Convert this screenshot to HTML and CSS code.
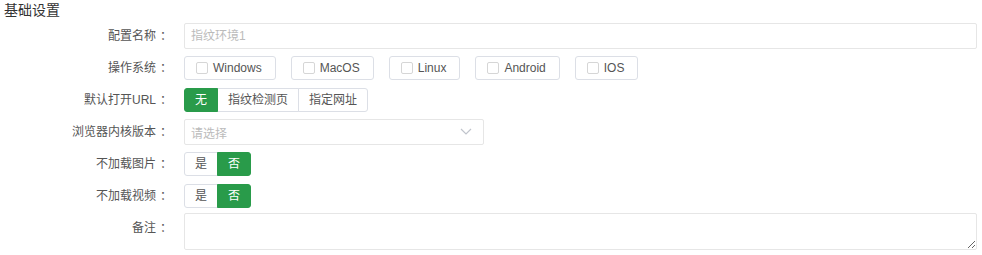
FILE: index.html
```html
<!DOCTYPE html>
<html lang="zh-CN">
    <head>
        <meta charset="utf-8">
        <title>基础设置</title>
        <link rel="stylesheet" href="styles.css">
    </head>
    <body>
        <div class="section">
            <h3 class="section-title">基础设置</h3>
            <div class="form">
                <div class="form-row">
                    <label class="form-label">配置名称<span class="colon">：</span></label>
                    <div class="form-control">
                        <input class="text-input" type="text" placeholder="指纹环境1">
                    </div>
                </div>
                <div class="form-row">
                    <label class="form-label">操作系统<span class="colon">：</span></label>
                    <div class="form-control">
                        <span class="check-btn"><i class="check-box"></i>Windows</span>
                        <span class="check-btn"><i class="check-box"></i>MacOS</span>
                        <span class="check-btn"><i class="check-box"></i>Linux</span>
                        <span class="check-btn"><i class="check-box"></i>Android</span>
                        <span class="check-btn"><i class="check-box"></i>IOS</span>
                    </div>
                </div>
                <div class="form-row">
                    <label class="form-label">默认打开URL<span class="colon">：</span></label>
                    <div class="form-control">
                        <div class="btn-group">
                            <span class="btn active">无</span>
                            <span class="btn">指纹检测页</span>
                            <span class="btn">指定网址</span>
                        </div>
                    </div>
                </div>
                <div class="form-row">
                    <label class="form-label">浏览器内核版本<span class="colon">：</span></label>
                    <div class="form-control">
                        <div class="select">
                            <span class="placeholder">请选择</span>
                            <svg class="chevron" viewBox="0 0 12 8"><polyline points="1,1 6,6 11,1"/></svg>
                        </div>
                    </div>
                </div>
                <div class="form-row">
                    <label class="form-label">不加载图片<span class="colon">：</span></label>
                    <div class="form-control">
                        <div class="btn-group">
                            <span class="btn">是</span>
                            <span class="btn active">否</span>
                        </div>
                    </div>
                </div>
                <div class="form-row">
                    <label class="form-label">不加载视频<span class="colon">：</span></label>
                    <div class="form-control">
                        <div class="btn-group">
                            <span class="btn">是</span>
                            <span class="btn active">否</span>
                        </div>
                    </div>
                </div>
                <div class="form-row">
                    <label class="form-label">备注<span class="colon">：</span></label>
                    <div class="form-control">
                        <textarea class="text-area"></textarea>
                    </div>
                </div>
            </div>
        </div>
    </body>
</html>
```
FILE: styles.css
```css
body {
    font-family: "Liberation Sans", "Noto Sans CJK SC", sans-serif;
    font-size: 12px;
    color: #555;
    margin: 0;
}
.section {
    padding-right: 5px;
}
.section-title {
    margin: 0;
    padding-left: 4px;
    font-size: 14px;
    font-weight: normal;
    line-height: 20px;
    color: #333;
}
.form-row {
    display: flex;
    align-items: flex-start;
}
.form-label {
    flex: 0 0 172px;
    padding-right: 12px;
    text-align: right;
    line-height: 32px;
    color: #555;
}
.colon {
    padding-left: 4px;
}
.form-control {
    flex: 1;
    display: flex;
    align-items: center;
    min-height: 32px;
}
.text-input {
    box-sizing: border-box;
    width: 100%;
    height: 26px;
    border: 1px solid #e6e6e6;
    border-radius: 2px;
    padding: 0 6px;
    font: inherit;
    outline: none;
}
.text-input::placeholder {
    color: #bbb;
}
.check-btn {
    display: inline-flex;
    align-items: center;
    box-sizing: border-box;
    height: 24px;
    padding: 0 13px 0 11px;
    margin-right: 15px;
    border: 1px solid #dcdfe6;
    border-radius: 3px;
    color: #555;
}
.check-box {
    box-sizing: border-box;
    width: 12px;
    height: 12px;
    margin-right: 5px;
    border: 1px solid #d6d6d6;
    border-radius: 2px;
    background: #fff;
}
.btn-group {
    display: flex;
}
.btn {
    box-sizing: border-box;
    height: 24px;
    line-height: 22px;
    padding: 0 10px;
    border: 1px solid #dcdfe6;
    margin-left: -1px;
    color: #555;
    background: #fff;
}
.btn:first-child {
    margin-left: 0;
    border-radius: 3px 0 0 3px;
}
.btn:last-child {
    border-radius: 0 3px 3px 0;
}
.btn.active {
    background: #299b4a;
    border-color: #299b4a;
    color: #fff;
    position: relative;
}
.select {
    box-sizing: border-box;
    display: flex;
    align-items: center;
    justify-content: space-between;
    width: 300px;
    height: 26px;
    padding: 0 11px 0 6px;
    border: 1px solid #e6e6e6;
    border-radius: 2px;
}
.placeholder {
    color: #bbb;
}
.chevron {
    width: 12px;
    height: 8px;
    fill: none;
    stroke: #c0c4cc;
    stroke-width: 1.2;
}
.text-area {
    box-sizing: border-box;
    display: block;
    width: 100%;
    height: 37px;
    margin-top: 1px;
    border: 1px solid #e6e6e6;
    border-radius: 2px;
    font: inherit;
    outline: none;
}
```
